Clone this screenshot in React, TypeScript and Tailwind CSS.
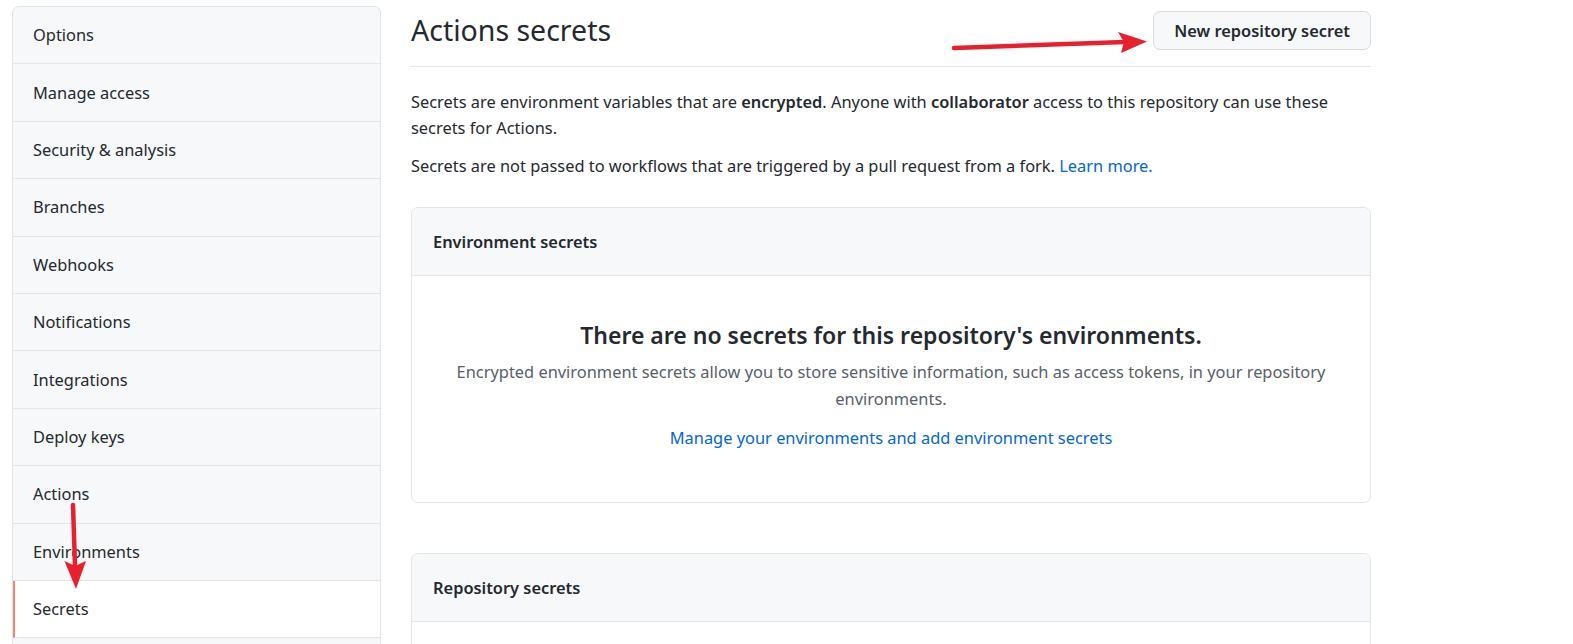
import React from 'react';

const menu = [
  'Options',
  'Manage access',
  'Security & analysis',
  'Branches',
  'Webhooks',
  'Notifications',
  'Integrations',
  'Deploy keys',
  'Actions',
  'Environments',
  'Secrets',
];

function Arrows() {
  // red annotation arrows drawn over the page
  return (
    <svg className="absolute left-0 top-0 pointer-events-none" width="1573" height="644" viewBox="0 0 1573 644">
      <line x1="954" y1="48" x2="1125" y2="42" stroke="#e8202d" strokeWidth="4.5" strokeLinecap="round" />
      <polygon points="1118,32 1147,41.5 1121,53 1124,42" fill="#e8202d" />
      <line x1="73" y1="505" x2="75" y2="566" stroke="#e8202d" strokeWidth="4.5" strokeLinecap="round" />
      <polygon points="64.5,561 76,589 86,561 75,566" fill="#e8202d" />
    </svg>
  );
}

export default function App() {
  return (
    <div className="relative h-[644px] overflow-hidden bg-white text-[#24292e] font-['Noto_Sans',sans-serif] text-[16.4px] leading-[26px]">
      <div className="flex pl-[12px] gap-[30px]">
        {/* ── Sidebar ── */}
        <nav className="mt-[6px] w-[369px] shrink-0 rounded-t-[7px] border border-[#e1e4e8] bg-[#f6f8fa] overflow-hidden">
          {menu.map(item =>
            item === 'Secrets' ? (
              <div
                key={item}
                className="flex h-[57.4px] items-center border-b border-[#e1e4e8] border-l-2 border-l-[#f9826c] bg-white pl-[18px]"
              >
                {item}
              </div>
            ) : (
              <div key={item} className="flex h-[57.4px] items-center border-b border-[#e1e4e8] pl-[20px]">
                {item}
              </div>
            )
          )}
        </nav>

        {/* ── Main ── */}
        <main className="w-[960px] shrink-0">
          <div className="flex items-center justify-between border-b border-[#e1e4e8] pt-[11px] pb-[16px]">
            <h1 className="text-[28.5px] leading-[39px] font-normal">Actions secrets</h1>
            <button className="h-[39px] rounded-[7px] border border-[#d8dbdf] bg-[#f6f8fa] px-[20px] text-[16.4px] font-semibold">
              New repository secret
            </button>
          </div>

          <p className="mt-[22px]">
            Secrets are environment variables that are <strong className="font-semibold">encrypted</strong>. Anyone
            with <strong className="font-semibold">collaborator</strong> access to this repository can use these
            secrets for Actions.
          </p>
          <p className="mt-[12px]">
            Secrets are not passed to workflows that are triggered by a pull request from a fork.{' '}
            <a className="text-[#0366d6]">Learn more.</a>
          </p>

          {/* ── Environment secrets ── */}
          <section className="mt-[28px] rounded-[7px] border border-[#e1e4e8]">
            <div className="flex h-[68px] items-center rounded-t-[7px] border-b border-[#e1e4e8] bg-[#f6f8fa] px-[21px] font-semibold">
              Environment secrets
            </div>
            <div className="flex flex-col items-center px-[38px] pt-[44px] pb-[51px] text-center">
              <h3 className="text-[23px] leading-[31px] font-semibold">There are no secrets for this repository's environments.</h3>
              <p className="mt-[8px] leading-[26.5px] text-[#586069]">
                Encrypted environment secrets allow you to store sensitive information, such as access tokens, in your
                repository environments.
              </p>
              <a className="mt-[13px] text-[#0366d6]">Manage your environments and add environment secrets</a>
            </div>
          </section>

          {/* ── Repository secrets ── */}
          <section className="mt-[50px] rounded-t-[7px] border border-[#e1e4e8]">
            <div className="flex h-[68px] items-center rounded-t-[7px] border-b border-[#e1e4e8] bg-[#f6f8fa] px-[21px] font-semibold">
              Repository secrets
            </div>
            <div className="flex justify-end gap-[19px] px-[21px] pt-[22px] pb-[20px]">
              <button className="h-[36px] w-[73px] rounded-[7px] border border-[#d8dbdf] bg-[#f6f8fa] text-[15px] font-semibold">
                Update
              </button>
              <button className="h-[36px] w-[78px] rounded-[7px] border border-[#d8dbdf] bg-[#f6f8fa] text-[15px] font-semibold text-[#cb2431]">
                Remove
              </button>
            </div>
          </section>
        </main>
      </div>
      <Arrows />
    </div>
  );
}
